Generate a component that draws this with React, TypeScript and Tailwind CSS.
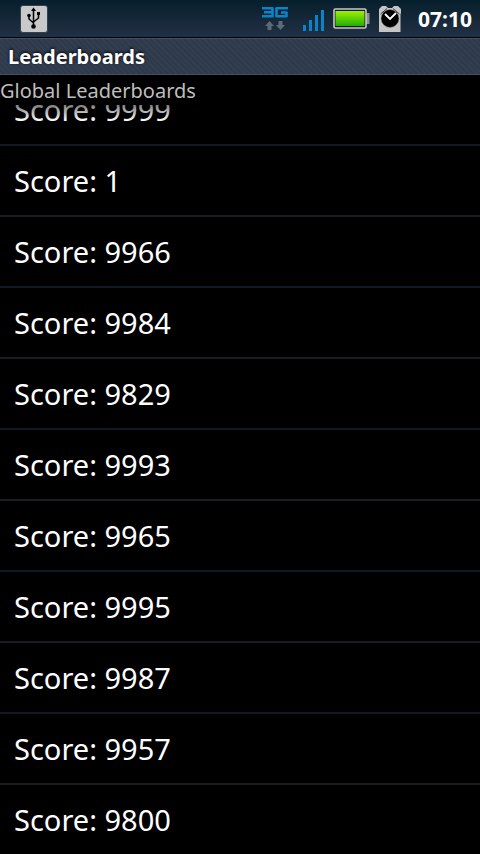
import React from "react";

const scores = [9999, 1, 9966, 9984, 9829, 9993, 9965, 9995, 9987, 9957, 9800];

function UsbIcon() {
  return (
    <svg width="28" height="28" viewBox="0 0 28 28" aria-label="USB connected">
      <rect x="0.5" y="0.5" width="27" height="27" rx="2.5" fill="#c9c9c9" stroke="#34404a" />
      <g fill="none" stroke="#000" strokeWidth="1.5">
        <path d="M13.5 22V5M13.5 18L9 14V10M13.5 17L18.500 13V8" />
      </g>
      <path d="M13.500 2.500L16 6H11Z" />
      <circle cx="13.500" cy="21.500" r="2.300" />
      <circle cx="9" cy="10.500" r="1.800" />
      <rect x="17" y="7" width="3" height="3" />
    </svg>
  );
}

function NetworkIcon() {
  return (
    <svg width="28" height="26" viewBox="0 0 28 26" aria-label="3G data">
      <g fill="none" stroke="#0785c9" strokeWidth="2.600" strokeLinejoin="round">
        <path d="M1 2.300H11.500V10.200H1M3 6.300H11" />
        <path d="M27 2.300H15.500V10.200H25.500V6.500H20" />
      </g>
      <path d="M4 20L8.500 15L13 20H10.500V24H6.500V20Z M15 19L19.500 24L24 19H21.500V15H17.500V19Z" fill="#5f6b74" />
    </svg>
  );
}

function SignalIcon() {
  return (
    <svg width="22" height="22" viewBox="0 0 22 22" fill="#0785c9" aria-label="Signal strength">
      <path d="M0 16H3V22H0Z M6 11H9V22H6Z M12 6H15V22H12Z M18 1H21V22H18Z" />
    </svg>
  );
}

function BatteryIcon() {
  return (
    <svg width="37" height="21" viewBox="0 0 37 21" aria-label="Battery full">
      <defs>
        <linearGradient id="charge" x1="0" y1="0" x2="0" y2="1">
          <stop offset="0" stopColor="#a0f000" />
          <stop offset="1" stopColor="#1fae08" />
        </linearGradient>
      </defs>
      <rect x="32" y="5" width="4.500" height="11" fill="#8e8e8e" />
      <rect x="1" y="1" width="32" height="19" rx="1.500" fill="#181818" stroke="#c8c8c8" strokeWidth="1.600" />
      <rect x="2.500" y="3" width="29" height="15" fill="url(#charge)" />
    </svg>
  );
}

function AlarmIcon() {
  return (
    <svg width="24" height="27" viewBox="0 0 24 27" aria-label="Alarm set">
      <path d="M1 8V4L4 1H8L10 3H14L16 1H20L23 4V8L22.500 9V27H1V9Z" fill="#c5c5c5" />
      <path d="M2.500 9L9 3.500M21.500 9L15 3.500" stroke="#333e47" />
      <circle cx="12" cy="13.500" r="9" fill="#000" stroke="#8d8d8d" strokeWidth="0.500" />
      <path d="M7 9L12 14L18 8" fill="none" stroke="#fff" strokeWidth="1.800" />
    </svg>
  );
}

export default function App() {
  return (
    <main className="flex h-screen flex-col overflow-hidden bg-black font-['Noto_Sans',sans-serif] text-white">
      <header className="flex h-[38px] shrink-0 items-center justify-between border-b border-black bg-linear-to-b from-[#061f2c] to-[#223045] pr-2 pl-5">
        <UsbIcon />
        <div className="flex items-center">
          <NetworkIcon />
          <div className="ml-3.5 pt-0.5">
            <SignalIcon />
          </div>
          <div className="ml-2">
            <BatteryIcon />
          </div>
          <div className="ml-2">
            <AlarmIcon />
          </div>
          <time className="ml-4 pt-px text-[21px] leading-7 font-bold">07:10</time>
        </div>
      </header>
      <h1 className="flex h-[37px] shrink-0 items-center border-y border-[#42506a] bg-[#2e394b] bg-[repeating-linear-gradient(45deg,#ffffff06_0px,#ffffff06_2px,transparent_2px,transparent_4px)] px-2 pt-px text-xl leading-7 font-bold text-shadow-[0_-1px_3px_#000]">
        Leaderboards
      </h1>
      <h2 className="h-[30px] shrink-0 pt-0.5 text-xl leading-7 text-[#bebebe]">Global Leaderboards</h2>
      <div className="relative min-h-0 flex-1 overflow-hidden">
        <ul className="-mt-[30px]">
          {scores.map((score) => (
            <li
              key={score}
              className="flex h-[71px] items-center border-b-2 border-[#101a24] px-3.5 text-[29px] leading-9 even:border-[#1a1e20]"
            >
              Score: {score}
            </li>
          ))}
        </ul>
        <div className="pointer-events-none absolute inset-x-0 top-0 h-4 bg-linear-to-b from-black/50 to-transparent" />
      </div>
    </main>
  );
}
